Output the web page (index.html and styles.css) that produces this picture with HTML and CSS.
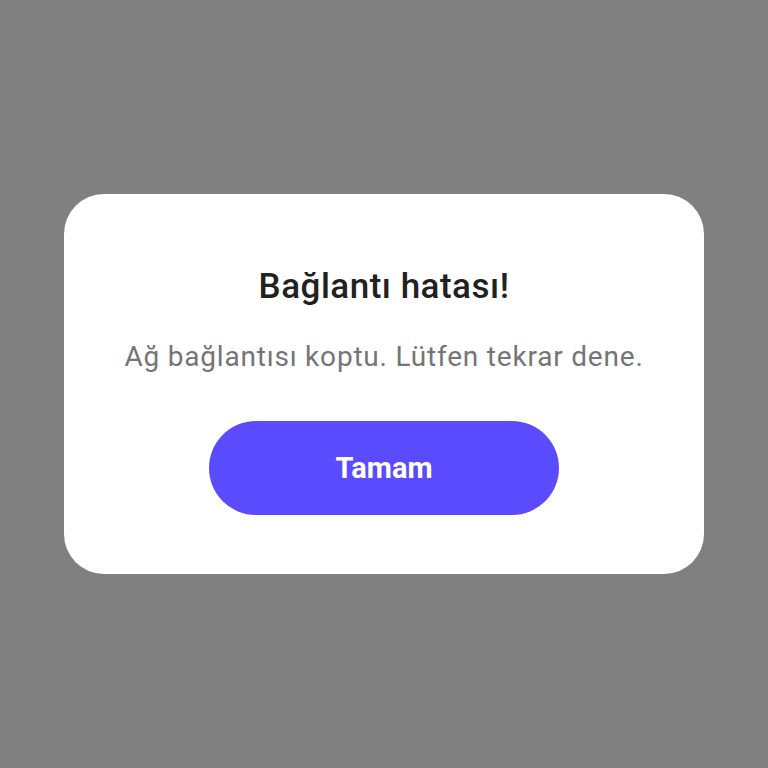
FILE: index.html
```html
<!DOCTYPE html>
<html lang="tr">
<head>
<meta charset="utf-8">
<link rel="stylesheet" href="styles.css">
</head>
<body>
<div class="dialog">
  <h1 class="title">Bağlantı hatası!</h1>
  <p class="message">Ağ bağlantısı koptu. Lütfen tekrar dene.</p>
  <button class="ok">Tamam</button>
</div>
</body>
</html>
```
FILE: styles.css
```css
html, body {
  margin: 0;
  padding: 0;
}
body {
  width: 768px;
  height: 768px;
  background: #808080;
  display: flex;
  align-items: center;
  justify-content: center;
  font-family: Roboto, "Noto Sans", sans-serif;
}
.dialog {
  box-sizing: border-box;
  width: 640px;
  height: 380px;
  background: #ffffff;
  border-radius: 40px;
  padding: 73px 0 0;
  display: flex;
  flex-direction: column;
  align-items: center;
}
.title {
  margin: 0;
  font-size: 35px;
  line-height: 40px;
  font-weight: 500;
  letter-spacing: 0.5px;
  color: #212121;
}
.message {
  margin: 34px 0 0;
  font-size: 28px;
  line-height: 32px;
  font-weight: 400;
  letter-spacing: 0.8px;
  color: #757575;
}
.ok {
  margin-top: 48px;
  width: 350px;
  height: 94px;
  border: none;
  border-radius: 47px;
  background: #5b4bff;
  color: #ffffff;
  font-family: Roboto, "Noto Sans", sans-serif;
  font-size: 29px;
  font-weight: 700;
  padding: 0;
}
```
